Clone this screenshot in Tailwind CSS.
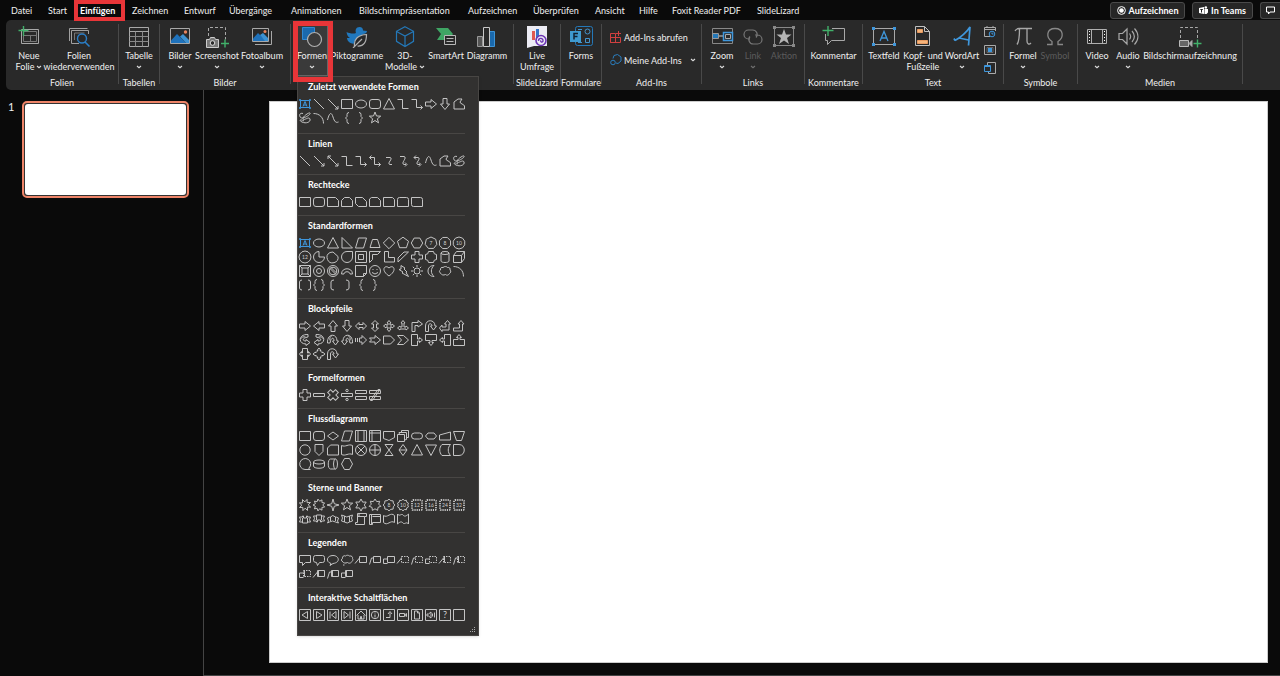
<!DOCTYPE html>
<html lang="de">
<head>
<meta charset="utf-8">
<title>Präsentation</title>
<script src="https://cdn.jsdelivr.net/npm/@tailwindcss/browser@4"></script>
</head>
<body class="min-h-screen flex flex-col overflow-hidden bg-[#0a0a0a] text-[#f0f0f0] font-['Lato','Noto_Sans',sans-serif] text-[9px] leading-[11px] whitespace-nowrap">
<svg class="hidden"><symbol id="chev" viewBox="0 0 6 4"><path d="M1 1l2 1.700L5 1" fill="none" stroke="#ddd" stroke-width="1.100"/></symbol></svg>

<header class="flex h-5 shrink-0 items-center pl-[11px]">
  <nav class="flex grow items-center">
    <a href="#" class="w-[37px]">Datei</a>
    <a href="#" class="w-8">Start</a>
    <a href="#" class="relative w-[52px] font-bold text-white">Einfügen<span class="absolute -left-1.5 -top-[5px] z-30 h-[21px] w-[51px] border-4 border-[#e83538]"></span></a>
    <a href="#" class="w-[52px]">Zeichnen</a>
    <a href="#" class="w-[45px]">Entwurf</a>
    <a href="#" class="w-[62px]">Übergänge</a>
    <a href="#" class="w-[68px]">Animationen</a>
    <a href="#" class="w-[109px]">Bildschirmpräsentation</a>
    <a href="#" class="w-[65px]">Aufzeichnen</a>
    <a href="#" class="w-[62px]">Überprüfen</a>
    <a href="#" class="w-11">Ansicht</a>
    <a href="#" class="w-[33px]">Hilfe</a>
    <a href="#" class="w-[85px]">Foxit Reader PDF</a>
    <a href="#">SlideLizard</a>
  </nav>
  <div class="flex gap-[7px] font-bold text-white">
    <button class="flex h-[17px] w-[75px] items-center justify-center gap-[3px] rounded-[3px] border border-[#4a4a4a] bg-[#262626]"><svg class="size-[9px]" viewBox="0 0 9 9"><circle cx="4.500" cy="4.500" r="3.900" fill="none" stroke="#fff"/><circle cx="4.500" cy="4.500" r="2.300" fill="#fff"/></svg>Aufzeichnen</button>
    <button class="flex h-[17px] w-[61px] items-center justify-center gap-[3px] rounded-[3px] border border-[#4a4a4a] bg-[#262626]"><svg class="size-[9px]" viewBox="0 0 9 9"><path fill="#fff" d="M0 2l5-1v7l-5-1zM5.500 3H9v3.500L7.500 8h-2z"/><circle cx="6.800" cy="1.500" r="1.300" fill="#fff"/><path d="M1.300 3.500h2.500M2.500 3.500v3" stroke="#222"/></svg>In Teams</button>
    <button aria-label="Kommentare" class="flex h-[17px] w-5 items-center justify-center rounded-l-[3px] border border-r-0 border-[#4a4a4a] bg-[#262626]"><svg class="size-[9px]" viewBox="0 0 9 9"><path fill="none" stroke="#fff" d="M.5 1h8v5H4L2.500 8V6h-2z"/></svg></button>
  </div>
</header>

<section class="relative z-10 ml-1.5 flex h-[70px] shrink-0 rounded-l-[5px] bg-[#292929] pb-0.5">
  <div class="flex w-28 shrink-0 flex-col">
    <div class="flex grow pt-1.5">
      <button class="flex w-[46px] flex-col items-center"><svg class="mb-0.5 h-[22px] w-6" viewBox="0 0 24 22" fill="none" stroke="#a8a8a8"><path d="M4.500 3.500h17v14h-17z"/><path d="M6.500 5.500h13v10h-13z M6.500 9.500h13 M13.500 9.500v6" stroke="#777"/><path d="M6.500 0v10M1.500 4.500h10" stroke="#41b06a" stroke-width="1.400"/></svg><span>Neue</span><span class="flex items-center gap-0.5">Folie <svg class="h-1 w-1.5"><use href="#chev"/></svg></span></button>
      <button class="flex w-[54px] flex-col items-center"><svg class="mb-0.5 h-[22px] w-6" viewBox="0 0 24 22" fill="none" stroke="#a0a0a0"><path d="M2.500 15V2.500h18"/><path d="M12 17.500H4.500v-13h17V8"/><path d="M7.500 14v-7h10" stroke="#777"/><circle cx="15" cy="12.500" r="4.500" fill="#292929" stroke="#2a7fc8" stroke-width="1.400"/><path d="M18 16l4.500 4.500" stroke="#2a7fc8" stroke-width="1.600"/></svg><span>Folien</span><span>wiederverwenden</span></button>
    </div><div class="text-center">Folien</div>
  </div>
  <div class="my-1 w-px shrink-0 bg-[#494949]"></div>
  <div class="flex w-10 shrink-0 flex-col">
    <div class="flex grow pt-1.5"><button class="flex w-10 flex-col items-center"><svg class="mb-0.5 h-[22px] w-6" viewBox="0 0 24 22" fill="none" stroke="#a8a8a8"><path d="M2.500 1.500h19v19h-19z M2.500 5.500h19"/><path d="M2.500 10.500h19M2.500 15.500h19M8.500 5.500v15M15.500 5.500v15" stroke="#888"/></svg><span>Tabelle</span><svg class="mt-1 h-1 w-1.5"><use href="#chev"/></svg></button></div>
    <div class="text-center">Tabellen</div>
  </div>
  <div class="my-1 w-px shrink-0 bg-[#494949]"></div>
  <div class="flex w-[130px] shrink-0 flex-col">
    <div class="flex grow pt-1.5">
      <button class="flex w-10 flex-col items-center"><svg class="mb-0.5 h-[22px] w-6" viewBox="0 0 24 22" fill="none"><path d="M2.500 2.500h19v15h-19z" stroke="#a8a8a8"/><path d="M3 14.500L9 8l9 9H3z" fill="#1f72bb"/><path d="M12 10.500l3-2.500 6 6v3h-3z" fill="#3d92d2"/><circle cx="17.500" cy="6" r="1.700" fill="#e8835c"/></svg><span>Bilder</span><svg class="mt-1 h-1 w-1.5"><use href="#chev"/></svg></button>
      <button class="flex w-[34px] flex-col items-center"><svg class="mb-0.5 h-[22px] w-6" viewBox="0 0 24 22" fill="none" stroke="#a8a8a8"><path d="M3.500 10V1.500h17v12" stroke-dasharray="3 2"/><path d="M1.500 13.500h3l1-2h4l1 2h3v8h-12z" fill="#777" stroke="#ccc"/><circle cx="7.500" cy="17" r="2.300" fill="#292929" stroke="#ddd"/><path d="M20 13.500v8M16 17.500h8" stroke="#41b06a" stroke-width="1.400"/></svg><span>Screenshot</span><svg class="mt-1 h-1 w-1.5"><use href="#chev"/></svg></button>
      <button class="flex w-14 flex-col items-center"><svg class="mb-0.5 h-[22px] w-6" viewBox="0 0 24 22" fill="none"><path d="M5 18.500h16.500V5" stroke="#a8a8a8"/><path d="M2.500 2.500h16v13h-16z" stroke="#a8a8a8"/><path d="M3 12.500L8 7l8 8H3z" fill="#1f72bb"/><path d="M10 9l3-2 5 5v3h-3z" fill="#3d92d2"/><circle cx="15" cy="5.500" r="1.500" fill="#e8835c"/></svg><span>Fotoalbum</span><svg class="mt-1 h-1 w-1.5"><use href="#chev"/></svg></button>
    </div><div class="text-center">Bilder</div>
  </div>
  <div class="my-1 w-px shrink-0 bg-[#494949]"></div>
  <div class="flex w-[222px] shrink-0 flex-col">
    <div class="flex grow pt-1.5">
      <div class="relative w-[42px]">
        <button aria-expanded="true" class="mx-auto -mt-0.5 flex h-[52px] w-8 flex-col items-center border border-[#666] bg-[#3a3a3a] pt-px"><svg class="mb-0.5 h-[22px] w-6 shrink-0" viewBox="0 0 24 22" fill="none"><path d="M2.500 1.500h12v12h-12z" fill="#1a69ad" stroke="#3089d2"/><circle cx="14.500" cy="13.500" r="7" fill="#3a3a3a" stroke="#b0b0b0" stroke-width="1.200"/></svg><span>Formen</span><svg class="mt-1 h-1 w-1.5"><use href="#chev"/></svg></button>
        <span class="pointer-events-none absolute left-0.5 -top-[5px] z-30 h-[61px] w-10 border-[5px] border-[#e83538]"></span>
        <div id="shape-menu" class="absolute left-1.5 top-[50px] z-20 h-[560px] w-[182px] border border-[#484644] bg-[#323130] shadow-sm">
          <div id="shape-list"></div>
          <svg class="absolute bottom-0.5 right-0.5 size-1.5" viewBox="0 0 6 6" fill="#aaa"><path d="M4 0h1v1H4zM4 2h1v1H4zM4 4h1v1H4zM2 2h1v1H2zM2 4h1v1H2zM0 4h1v1H0z"/></svg>
        </div>
      </div>
      <button class="flex w-12 flex-col items-center"><svg class="mb-0.5 h-[22px] w-6" viewBox="0 0 24 22" fill="none"><path d="M1.500 6c3 1.500 7 2 9.500 1-1-3 0-6 3.500-6 2.500 0 3.500 1.500 3.500 3.500l4 .5c0 2-2 3-4 3l-2 4-5 6c-6 0-9-3-9-6h3c-2-1-3-3-3.500-6z" fill="#2178bd"/><path d="M9.500 20c-1-7 4-11 12-11.500 0 8-3 12-9 11.500M8 22l9-9" fill="#292929" stroke="#b0b0b0" stroke-width="1.200"/></svg><span>Piktogramme</span></button>
      <button class="flex w-12 flex-col items-center"><svg class="mb-0.5 h-[22px] w-6" viewBox="0 0 24 22" fill="none" stroke="#2478b8" stroke-width="1.200"><path d="M12 .8l8.500 4.500v10L12 20.500l-8.500-5.200v-10zM3.500 5.500L12 10l8.500-4.500M12 10v10.500"/></svg><span>3D-</span><span class="flex items-center gap-0.5">Modelle <svg class="h-1 w-1.5"><use href="#chev"/></svg></span></button>
      <button class="flex w-[34px] flex-col items-center"><svg class="mb-0.5 h-[22px] w-6" viewBox="0 0 24 22" fill="none"><path d="M2 2h12l5 6-5 6H3l4-6z" fill="#3fa564"/><path d="M10.500 9.500h11v9h-11z" fill="#292929" stroke="#b8b8b8"/><path d="M12.500 12.500h7M12.500 15.500h7" stroke="#b8b8b8"/></svg><span>SmartArt</span></button>
      <button class="flex w-12 flex-col items-center"><svg class="mb-0.5 h-[22px] w-6" viewBox="0 0 24 22" fill="none"><path d="M2.500 10.500h5v10h-5z" fill="#555" stroke="#999"/><path d="M14.500 5.500h5v15h-5z" fill="#1a69ad" stroke="#3c94d8"/><path d="M8.500 1.500h6v19h-6z" fill="#292929" stroke="#c8c8c8"/></svg><span>Diagramm</span></button>
    </div>
  </div>
  <div class="my-1 w-px shrink-0 bg-[#494949]"></div>
  <div class="flex w-[46px] shrink-0 flex-col">
    <div class="flex grow pt-1.5"><button class="flex w-[46px] flex-col items-center"><svg class="mb-0.5 h-[22px] w-6" viewBox="0 0 24 22" fill="none"><path d="M2 0h20v20H9l-7 2z" fill="#ececf4"/><path d="M7 5h3v9H7z" fill="#e05a50"/><path d="M11 3h3v9h-3z" fill="#3776c8"/><circle cx="16" cy="14.500" r="5" fill="#ececf4" stroke="#6d35b5" stroke-width="1.600"/><path d="M13.500 15c0-4 5-3 4.500 0-.5 2-3 1-2-.5" stroke="#6d35b5" stroke-width="1.400"/></svg><span>Live</span><span>Umfrage</span></button></div>
    <div class="text-center">SlideLizard</div>
  </div>
  <div class="my-1 w-px shrink-0 bg-[#494949]"></div>
  <div class="flex w-10 shrink-0 flex-col items-center">
    <div class="flex grow pt-1.5"><button class="flex w-10 flex-col items-center"><svg class="mb-0.5 h-[22px] w-6" viewBox="0 0 24 22" fill="none"><rect x="6.500" y=".5" width="17" height="19" rx="2" stroke="#2478b8"/><circle cx="18.500" cy="5.500" r="2.500" stroke="#4494cc"/><path d="M16.500 12.500h4v4h-4zM9 3.500h4M9 16.500h4" stroke="#4494cc"/><path d="M1 5h11v11H1z" fill="#3f9ad0"/><path d="M5 13.500v-6h4M5 10.500h3.500" stroke="#123" stroke-width="1.500"/></svg><span>Forms</span></button></div>
    <div>Formulare</div>
  </div>
  <div class="my-1 w-px shrink-0 bg-[#494949]"></div>
  <div class="flex w-[99px] shrink-0 flex-col pl-2">
    <div class="flex grow flex-col gap-[11px] pt-[11px]">
      <button class="flex items-center gap-0.5"><svg class="size-3" viewBox="0 0 12 12" fill="none" stroke="#d04040"><path d="M.5 2.500h5v9h-5zM.5 6.500h10v5h-10zM8.500 0v5M6 2.500h5"/></svg>Add-Ins abrufen</button>
      <button class="flex items-center gap-0.5"><svg class="size-3" viewBox="0 0 12 12" fill="none" stroke="#2a7fc0"><path d="M3 4.500l1-3 3.500-1L11 3v4L8 9.500 6 9"/><circle cx="3" cy="8.500" r="2.300"/></svg>Meine Add-Ins<svg class="ml-1.5 h-1 w-1.5"><use href="#chev"/></svg></button>
    </div><div class="pr-2 text-center">Add-Ins</div>
  </div>
  <div class="my-1 w-px shrink-0 bg-[#494949]"></div>
  <div class="flex w-[102px] shrink-0 flex-col">
    <div class="flex grow pt-1.5">
      <button class="flex w-10 flex-col items-center"><svg class="mb-0.5 h-[22px] w-6" viewBox="0 0 24 22" fill="none"><path d="M2.500 2.500h20v15h-20z" stroke="#888"/><path d="M2.500 7.500h6v5h-6z" fill="#2478b8" stroke="#999"/><path d="M9 10h4" stroke="#999" stroke-width="1.500"/><path d="M13.500 6.500h9v8h-9z" fill="#292929" stroke="#3f97dc" stroke-width="1.500"/><path d="M15.500 8.500h5v4h-5z" stroke="#aaa"/></svg><span>Zoom</span><svg class="mt-1 h-1 w-1.5"><use href="#chev"/></svg></button>
      <button disabled class="flex w-[22px] flex-col items-center text-[#5c5c5c]"><svg class="mb-0.5 h-[22px] w-6 shrink-0" viewBox="0 0 24 22" fill="none" stroke="#777" stroke-width="1.200"><path d="M9 13H7.500a4.500 4.500 0 010-9h4a4.500 4.500 0 013.500 7.500M14 9h2.500a4.500 4.500 0 010 9h-4A4.500 4.500 0 019 10.500"/></svg><span>Link</span><svg class="mt-1 h-1 w-1.5 opacity-40"><use href="#chev"/></svg></button>
      <button disabled class="flex w-10 flex-col items-center text-[#5c5c5c]"><svg class="mb-0.5 h-[22px] w-6" viewBox="0 0 24 22" fill="none"><path d="M2.500 1.500h19v18h-19z" stroke="#888"/><path d="M1 0h3v3H1zM20 0h3v3h-3zM1 18h3v3H1zM20 18h3v3h-3z" fill="#888"/><path d="M12 3l2 5.500h5.500L15 12l2 6-5-3.500L7 18l2-6-4.500-3.500H10z" fill="#b4b4b4"/></svg><span>Aktion</span></button>
    </div><div class="text-center">Links</div>
  </div>
  <div class="my-1 w-px shrink-0 bg-[#494949]"></div>
  <div class="flex w-[57px] shrink-0 flex-col">
    <div class="flex grow pt-1.5"><button class="flex w-[57px] flex-col items-center"><svg class="mb-0.5 h-[22px] w-6" viewBox="0 0 24 22" fill="none" stroke="#a8a8a8"><path d="M10 2.500h12.500v12H9.500l-4 4v-4h-2V8"/><path d="M6 0v10M.5 4.500h11" stroke="#41b06a" stroke-width="1.400"/></svg><span>Kommentar</span></button></div>
    <div class="text-center">Kommentare</div>
  </div>
  <div class="my-1 w-px shrink-0 bg-[#494949]"></div>
  <div class="flex w-[140px] shrink-0 flex-col">
    <div class="flex grow pt-1.5">
      <button class="flex w-[42px] flex-col items-center"><svg class="mb-0.5 h-[22px] w-6" viewBox="0 0 24 22" fill="none"><path d="M1.500 2.500h21v16h-21z" stroke="#a8a8a8"/><path d="M0 1h3v3H0zM21 1h3v3h-3zM0 17h3v3H0zM21 17h3v3h-3z" fill="#3f97dc"/><path d="M8 15l4-9.500L16 15M9.500 12h5" stroke="#3f97dc" stroke-width="1.300"/></svg><span>Textfeld</span></button>
      <button class="flex w-9 flex-col items-center"><svg class="mb-0.5 h-[22px] w-6" viewBox="0 0 24 22" fill="none"><path d="M4.500.5h9l5 5v14h-14zM13.500.5v5h5" stroke="#c0c0c0"/><path d="M6.500 3.500h5v3h-5zM6.500 14.500h10v3h-10z" fill="#f4b57c" stroke="#e89a60"/></svg><span>Kopf- und</span><span>Fußzeile</span></button>
      <button class="flex w-[42px] flex-col items-center"><svg class="mb-0.5 h-[22px] w-6" viewBox="0 0 24 22" fill="none" stroke="#3f97dc" stroke-width="1.700"><path d="M5 14.500C10 12 17 6 20 1l-1.500 18.500M9 12l9.500 2M5 14.500l-1-2"/></svg><span>WordArt</span><svg class="mt-1 h-1 w-1.5"><use href="#chev"/></svg></button>
      <div class="flex w-3.5 flex-col items-center gap-1.5">
        <button aria-label="Datum und Uhrzeit"><svg class="size-3" viewBox="0 0 12 12" fill="none" stroke="#aaa"><path d="M6 10.500H.5v-9h11V5M.5 3.500h11M3 0v2M9 0v2"/><circle cx="8" cy="8" r="2.800" stroke="#3f97dc"/><path d="M8 6.500V8h1.500" stroke="#3f97dc"/></svg></button>
        <button aria-label="Foliennummer"><svg class="size-3" viewBox="0 0 12 12" fill="none" stroke="#aaa"><path d="M.5 1.500h11v9H.5z"/><path d="M3 3.500h6v5H3z" stroke="#666"/><path d="M4 4h4v4H4z" fill="#3f97dc" stroke="none"/></svg></button>
        <button aria-label="Objekt"><svg class="size-3" viewBox="0 0 12 12" fill="none" stroke="#aaa"><path d="M3.500 3V.5h8v11h-7V10"/><path d="M.5 3.500h6v6h-6zM.5 4.500h6" stroke="#3f97dc"/></svg></button>
      </div>
    </div><div class="text-center">Text</div>
  </div>
  <div class="my-1 w-px shrink-0 bg-[#494949]"></div>
  <div class="flex w-[73px] shrink-0 flex-col">
    <div class="flex grow pt-1.5">
      <button class="flex w-[38px] flex-col items-center"><svg class="mb-0.5 h-[22px] w-6" viewBox="0 0 24 22" fill="none" stroke="#a8a8a8" stroke-width="1.300"><path d="M4 5c1-2 2-2.500 4-2.500h13M8.500 3c0 7 0 12-2.500 15.500M16 3v12c0 3 2 4 4 2"/></svg><span>Formel</span><svg class="mt-1 h-1 w-1.5"><use href="#chev"/></svg></button>
      <button disabled class="flex w-[26px] flex-col items-center text-[#5c5c5c]"><svg class="mb-0.5 h-[22px] w-6" viewBox="0 0 24 22" fill="none" stroke="#888" stroke-width="1.300"><path d="M4 18.500h5v-3C3 12 3 2.500 12 2.500S21 12 15 15.500v3h5"/></svg><span>Symbol</span></button>
    </div><div class="text-center">Symbole</div>
  </div>
  <div class="my-1 w-px shrink-0 bg-[#494949]"></div>
  <div class="flex w-[164px] shrink-0 flex-col">
    <div class="flex grow pt-1.5">
      <button class="flex w-[38px] flex-col items-center"><svg class="mb-0.5 h-[22px] w-6" viewBox="0 0 24 22" fill="none" stroke="#b0b0b0"><path d="M2.500 3.500h19v14h-19zM6.500 3.500v14M17.500 3.500v14"/><path d="M4.500 5v12M19.500 5v12" stroke="#fff" stroke-dasharray="1 2"/></svg><span>Video</span><svg class="mt-1 h-1 w-1.5"><use href="#chev"/></svg></button>
      <button class="flex w-6 flex-col items-center"><svg class="mb-0.5 h-[22px] w-6 shrink-0" viewBox="0 0 24 22" fill="none" stroke="#a8a8a8" stroke-width="1.200"><path d="M3 7.500h3.500L11 3v15l-4.500-4.500H3zM13.500 7.500c1.500 2 1.500 4 0 6M16 5c3 3.500 3 7.500 0 11M18.500 2.500c4.500 5 4.500 11 0 16"/></svg><span>Audio</span><svg class="mt-1 h-1 w-1.5"><use href="#chev"/></svg></button>
      <button class="flex w-[100px] flex-col items-center"><svg class="mb-0.5 h-[22px] w-6" viewBox="0 0 24 22" fill="none" stroke="#a8a8a8"><path d="M2.500 12V1.500h17v11" stroke-dasharray="3 2"/><path d="M1.500 14.500h9v6h-9z" fill="#666" stroke="#bbb"/><path d="M11 17.500l3-3v6z" fill="#aaa"/><path d="M19.500 13.500v8M15.500 17.500h8" stroke="#41b06a" stroke-width="1.400"/></svg><span>Bildschirmaufzeichnung</span></button>
    </div><div class="text-center">Medien</div>
  </div>
  <div class="my-1 w-px shrink-0 bg-[#494949]"></div>
</section>

<main class="flex grow">
  <aside class="flex w-[204px] shrink-0 items-start border-r border-[#444] pt-[11px]">
    <span class="w-[22px] pl-2 text-[11px]">1</span>
    <button aria-label="Folie 1" class="h-[97px] w-[167px] rounded-[5px] border-2 border-[#ee8468] bg-[#333] p-px"><span class="block h-full rounded-[3px] bg-white"></span></button>
  </aside>
  <div class="flex grow flex-col border-b border-[#444] pb-3 pl-[65px] pr-3 pt-[11px]"><div class="grow border border-[#ccc] bg-white"></div></div>
</main>

<script>
const txt = (s, x = 7, y = 9) => `<text x="${x}" y="${y}" text-anchor="middle" font-size="5" fill="#d0d0d0" stroke="none">${s}</text>`;
const circ = (r, x = 7, y = 7) => `<circle cx="${x}" cy="${y}" r="${r}"/>`;
const p = (d, a = '') => `<path d="${d}" ${a}/>`;
const poly = (n, r1, r2 = r1, rot = -90) => {
  const k = r1 === r2 ? n : n * 2; let s = '';
  for (let i = 0; i < k; i++) { const r = i % 2 ? r2 : r1, t = (rot + 360 * i / k) * Math.PI / 180; s += (i ? 'L' : 'M') + (7 + r * Math.cos(t)).toFixed(2) + ' ' + (7 + r * Math.sin(t)).toFixed(2); }
  return s + 'z';
};
const rot = (deg, m) => `<g transform="rotate(${deg} 7 7)">${m}</g>`;
const flip = m => `<g transform="matrix(-1 0 0 1 14 0)">${m}</g>`;
const box = 'M1.5 2.500h11v9h-11z', sq = 'M1.5 1.500h11v11h-11z';
const braceL = 'M5 1.500q-2 0-2 2v2L1.500 7 3 8.500v2q0 2 2 2', braceR = 'M9 1.500q2 0 2 2v2L12.500 7 11 8.500v2q0 2-2 2';
const S = {
  tbox: '<g stroke="#3f97dc"><path d="M2.500 3.500h9v7h-9z"/><path d="M5 9.500L7 4.500 9 9.500M6 8h2"/><path d="M1.500 2.500h1v1h-1zM11.500 2.500h1v1h-1zM1.500 10.500h1v1h-1zM11.500 10.500h1v1h-1z"/></g>',
  line: p('M2 2l10 10'), larr: p('M2 2l10 10M12 9v3H9'), l2: p('M2 2l10 10M12 9v3H9M2 5V2h3'),
  rect: p(box), ell: '<ellipse cx="7" cy="7" rx="5.500" ry="4"/>', rr: '<rect x="1.500" y="2.500" width="11" height="9" rx="2.500"/>',
  tri: p('M7 1.500l5.500 10.500h-11z'), elb: p('M1.500 2.500h5v9h6'), elba: p('M1.500 2.500h5v8h6M10.500 8.500l2 2-2 2'), elb2: p('M1.500 3.500h5v7h6M10.500 8.500l2 2-2 2M3.500 1.500l-2 2 2 2'),
  ar: p('M1.500 5v4h5.500v2.500l5.500-4.500L7 2.500V5z'),
  free: p('M2 12V5l4-3h4L8 5c0 2 4 2 4.500 4v3z'), scr: p('M5 2.500C0 1 1 8 5 7s8-4 7-5-8 4-7 6 6-3 7 0-4 5-8 3-1-3 2-1'),
  arc: p('M1.500 2.500c6 0 10 4 10 10'), cur: p('M1.500 9c2-8 4-8 5.500-3s3 6 5.500 5'),
  br1: p('M9 1.500q-2 0-2 2v2L5.500 7 7 8.500v2q0 2 2 2'), br2: p('M5 1.500q2 0 2 2v2L8.500 7 7 8.500v2q0 2-2 2'),
  star: p(poly(5, 6, 2.5)), sc: p('M4 3.500h4c4 1-4 6 0 7h2'), sca: p('M4 2.500h4c4 1-4 7 0 8h2M9 8.500l2 2-2 2'), sc2: p('M4 3.500h4c4 1-4 6 0 7h2M9 8.500l2 2-2 2M6 1.500l-2 2 2 2'),
  plus: p('M5 1.500h4V5h3.500v4H9v3.500H5V9H1.500V5H5z'), uturn: p('M1.500 12.500V7c0-7 9.500-7 9.500 0h1.500L9.500 11 6.500 7H8c0-3-3.500-3-3.500 0v5.500z'),
  bent: p('M2 12.500v-9h6v-2l4.500 3.500L8 8V6.500H5v6z'), bup: p('M1.500 9h6V5H6l3-3.500L12 5h-1.500v7h-9z'),
  cup: p('M10 1.500C0 1 0 11 8 11v1.500L12 9.500 8 6.500V8C4 8 4 5 10 4zM2.500 6c1-2 3-2.500 5-2'),
  ribbon: p('M1.500 4h3v-1h5v1h3l-1 2.500 1 2.500h-3v1h-1v-2h-3v2h-1v-1h-3l1-2.500zM4.500 4v4M9.500 4v4')
};
const starNum = (n, k) => p(poly(k, 5.8, 4.7)) + txt(n);
const gear = n => '<rect x="2" y="2" width="10" height="10" rx="1" stroke-width="1.800" stroke-dasharray="1.200 1"/>' + txt(n);
const call = (dash, bar, tail) => p('M5.500 3.500h7v6h-7z', dash ? 'stroke-dasharray="1.500 1"' : '') + p(tail) + (bar ? p('M6.500 3.500v6') : '');
const T = ['M5.500 5L1 10.500', 'M5.500 5h-2l-2 6.500', 'M5.500 6h-4v4.500h4'];
const action = m => p(sq) + m;
const groups = [
 ['Zuletzt verwendete Formen', [S.tbox, S.line, S.larr, S.rect, S.ell, S.rr, S.tri, S.elb, S.elba, S.ar, rot(90, S.ar), S.free, S.scr, S.arc, S.cur, S.br1, S.br2, S.star]],
 ['Linien', [S.line, S.larr, S.l2, S.elb, S.elba, S.elb2, S.sc, S.sca, S.sc2, S.cur, S.free, S.scr]],
 ['Rechtecke', [S.rect, S.rr, p('M1.500 2.500h8l3 3v6h-11z'), p('M1.500 11.500V5.500l3-3h5l3 3v6z'), p('M1.500 2.500h7l4 4v5h-8l-3-3z'), p('M1.500 11.500V4l2-1.500h6l3 3v6z'), p('M1.500 2.500h9l2 2v7h-11z'), p('M1.500 11.500v-7q0-2 2-2h7q2 0 2 2v7z'), p('M1.500 2.500h9q2 0 2 2v7h-9q-2 0-2-2z')]],
 ['Standardformen', [S.tbox, S.ell, S.tri, p('M2 1.500L12.500 12H2z'), p('M4.500 2h8l-3 10h-8z'), p('M4.500 3.500h5l2.500 8H2z'), p(poly(4, 5.7)), p(poly(5, 5.8)), p(poly(6, 5.7, 5.7, 0)), p(poly(7, 6)) + txt(7), p(poly(8, 6, 6, 22)) + txt(8), p(poly(10, 6)) + txt(10),
   p(poly(12, 6)) + txt(12), p('M7 1.500A5.500 5.500 0 1012.500 7H7z'), p('M4 2.500a5.500 5.500 0 108 4L7 2z'), p('M7 1.500h5.500V7A5.500 5.500 0 117 1.500z'), p(sq + 'M4.500 4.500h5v5h-5z'), p('M1.500 1.500h11l-3 3h-5v5l-3 3z'), p('M2.500 1.500h4v6h6v4.500h-10z'), p('M2 12V8l6-6h4.500z'), S.plus, p('M4.500 1.500h5q0 3 3 3v5q-3 0-3 3h-5q0-3-3-3v-5q3 0 3-3z'), '<ellipse cx="7" cy="3" rx="4" ry="1.500"/>' + p('M3 3v8c0 2 8 2 8 0V3'), p('M1.500 5.500h8v7h-8zM1.500 5.500l3-4h8l-3 4M12.500 1.500v7l-3 4'),
   p(sq + 'M4 4h6v6H4zM1.500 1.500L4 4M12.500 1.500L10 4M1.500 12.500L4 10M12.500 12.500L10 10'), circ(5.5) + circ(2.5), circ(5.5) + circ(3.8) + p('M4 4.500l6 6M5 3.500l5 5'), p('M1.500 10c0-7 11-7 11 0H10c0-3-6-3-6 0z'), p('M1.500 1.500h11v8l-3 3h-8zM9.500 12.500v-3h3'), circ(5.5) + p('M4 8.500q3 3 6 0M5 5v1M9 5v1'), p('M7 12C-2 6 3 0 7 4c4-4 9 2 0 8z'), p('M5 1.500L9 4 8 5l3 3-1 .5 2.500 4L6 9l1-1-4-2.500 2-.5z'), circ(3) + p('M7 1v2M7 11v2M1 7h2M11 7h2M2.800 2.800l1.400 1.400M9.800 9.800l1.400 1.400M11.200 2.800L9.800 4.200M4.200 9.800l-1.400 1.400'), p('M10 1.500c-8 0-8 11 0 11-3.500-3-3.500-8 0-11z'), p('M3 9.500c-2-1-2-3-.5-3.500-.5-2 1-3 2.500-2.500 1.500-1.500 4-1 4.500 0 2-.5 3 1 2.500 2.500 1.500 1 .5 3-.5 3.500-1 2-3 2-4 1-2 1-4 .5-4.500-1z'), S.arc,
   p('M4 2q-2.500 0-2.500 2v6q0 2 2.500 2M10 2q2.500 0 2.500 2v6q0 2-2.500 2'), p(braceL + braceR), p('M8 2q-3 0-3 2v6q0 2 3 2'), p('M6 2q3 0 3 2v6q0 2-3 2'), S.br1, S.br2]],
 ['Blockpfeile', [S.ar, rot(180, S.ar), rot(-90, S.ar), rot(90, S.ar), p('M1.500 7L5 3.500v2h4v-2L12.500 7 9 10.500v-2H5v2z'), rot(90, p('M1.500 7L5 3.500v2h4v-2L12.500 7 9 10.500v-2H5v2z')), p('M7 1.500L9 4H8v2h2V5l2.500 2L10 9V8H8v2h1l-2 2.500L5 10h1V8H4v1L1.500 7 4 5v1h2V4H5z'), p('M7 1.500L9 4H8v4h2V7l2.500 2L10 11v-1H4v1L1.500 9 4 7v1h2V4H5z'), S.bent, S.uturn, p('M1.500 9L4 6v2h4V5H6.500L9.500 1.500 12.500 5H11v6H4v1.500z'), S.bup,
   S.cup, flip(S.cup), flip(rot(90, flip(flip(S.cup)))), rot(90, S.cup), p('M1.500 5v4M3.500 5v4M5.500 5v4H8v2.500L12.500 7 8 2.500V5z'), p('M1.500 5H7V2.500L12.500 7 7 11.500V9H1.500l2-2z'), p('M1.500 3h7l4 4-4 4h-7z'), p('M1.500 2.500h6l5 4.500-5 4.500h-6l4-4.500z'), p('M1.500 1.500h6V6h2V4.500l3 2.500-3 2.500V8h-2v4.500h-6z'), p('M1.500 1.500h11v6H8v2h1.500L7 12.500 4.500 9.500H6v-2H1.500z'), flip(p('M1.500 1.500h6V6h2V4.500l3 2.500-3 2.500V8h-2v4.500h-6z')), p('M1.500 12.500h11v-6H8v-2h1.500L7 1.500 4.500 4.500H6v2H1.500z'),
   p('M4.500 1.500h5V6h1V4.500l2 2.500-2 2.500V8h-1v4.500h-5V8h-1v1.500l-2-2.500 2-2.500V6h1z'), p('M7 1l2 2.500H8L10.500 6V5l2.500 2-2.500 2V8L8 10.500h1L7 13l-2-2.500h1L3.500 8v1L1 7l2.500-2v1L6 3.500H5z'), S.uturn]],
 ['Formelformen', [S.plus, p('M1.500 5.500h11v3h-11z'), rot(45, S.plus), p('M1.500 5.500h11v3h-11z') + circ(1.2, 7, 2.5) + circ(1.2, 7, 11.5), p('M1.500 2.500h11v3h-11zM1.500 8.500h11v3h-11z'), p('M1.500 2.500h11v3h-11zM1.500 8.500h11v3h-11zM2.500 12.500l7.500-11h2l-7.500 11z')]],
 ['Flussdiagramm', [S.rect, S.rr, p('M7 3l5.500 4L7 11 1.500 7z'), p('M4.500 2h8l-3 10h-8z'), p(sq + 'M4 1.500v11M10 1.500v11'), p(sq + 'M4 1.500v11M1.500 4h11'), p('M1.500 2.500h11v6l-5.500 3-5.500-2z'), p('M1.500 5.500h7v7h-7zM3.500 5.500l-.5-2h7.500v7l-2 .5M5.500 3.500v-2h7v7h-2'), '<rect x="1.500" y="4" width="11" height="6" rx="3"/>', p('M4 4h6l2.500 3L10 10H4L1.500 7z'), p('M1.500 6l11-3v8h-11z'), p('M1.500 2.500h11l-3 9h-5z'),
   circ(5.2), p('M3 1.500h8v7l-4 4-4-4z'), p('M4.500 2h8v10h-11V5z'), p('M1.500 2.500c4 2 7-2 11 0v9c-4-2-7 2-11 0z'), circ(5.5) + p('M3 3l8 8M11 3l-8 8'), circ(5.5) + p('M7 1.500v11M1.500 7h11'), p('M3 1.500h8l-8 11h8z'), p('M7 1.500L11 7l-4 5.500L3 7zM3 7h8'), S.tri, rot(180, S.tri), p('M4 1.500h8.500c-3 3-3 8 0 11H4c-3-3-3-8 0-11z'), p('M1.500 1.500H7c7 0 7 11 0 11H1.500z'),
   p('M12.500 12.500H7A5.500 5.500 0 1111 11v1.500'), '<ellipse cx="7" cy="5" rx="5.500" ry="2"/>' + p('M1.500 5v4c0 3 11 3 11 0V5'), '<ellipse cx="9.500" cy="7" rx="2" ry="5"/>' + p('M9.500 2h-5c-3 0-3 10 0 10h5'), p('M4.500 1.500h5l3 5.500-3 5.500h-5l-3-5.500z')]],
 ['Sterne und Banner', [p(poly(8, 6, 3.2, -70)), p(poly(9, 6, 3.8, -60)), p(poly(4, 6, 1.8)), S.star, p(poly(6, 6, 3.3)), p(poly(7, 6, 3.8)), starNum(8, 8), starNum(10, 10), gear(12), gear(16), gear(24), gear(32),
   rot(180, S.ribbon), S.ribbon, p('M1.500 11l1-2-1-3q2-1 3-1 2-3 5 0 1 0 3 1l-1 3 1 2-3-1q-3-2-6 0zM4.500 5v4M9.500 5v4'), p('M1.500 3l1 3-1 3 3 1q3 2 5 0l3-1-1-3 1-3-3 1q-3 2-5 0zM4.500 4v6M9.500 4v6'), p('M3.500 1.500h9v3h-2v8h-9v-2h2zM3.500 4.500h7M5 1.500v3'), p('M1.500 2.500h11v8h-8v2h-3zM3.500 2.500v10M4.500 4.500h8'), p('M1.500 3.500c4 3 7-4 11 0v7c-4-3-7 4-11 0z'), p('M1.500 2c2 3 4-1 5.500 1s3.500 1 5.500-1v10c-2-3-4 1-5.500-1s-3.500-1-5.500 1z')]],
 ['Legenden', [p('M1.500 2.500h11v7h-5l-3 3v-3h-3z'), p('M3.500 2.500h7q2 0 2 2v3q0 2-2 2h-3l-2 3-1-3q-3 0-3-2v-3q0-2 2-2z'), p('M5 10.500c-6-2-4-8 2-8s8 7 0 8l-3 2z'), p('M3 9c-2-1-2-3-.5-3.500C2 3.500 4 2 5.500 3c1-1 3-1 4 0 2-.5 3.500 1 3 2.500 1 1 0 3-1 3.500-1 1.500-3 1.500-4 .5-2 1-4 .5-4.500-.5zM3 12h1.500'), call(0,0,T[0]), call(0,0,T[1]), call(0,0,T[2]), call(1,0,T[0]), call(1,0,T[1]), call(1,0,T[2]), call(1,1,T[0]), call(1,1,T[1]),
   call(1,1,T[2]), call(0,1,T[0]), call(0,1,T[1]), call(0,1,T[2])]],
 ['Interaktive Schaltflächen', [action(p('M9.500 3.500v7L4 7z')), action(p('M4.500 3.500v7L10 7z')), action(p('M10 3.500v7L5.500 7zM4 3.500v7')), action(p('M4 3.500v7L8.500 7zM10 3.500v7')), action(p('M2.500 7.500L7 3l4.500 4.500M4 7v4h6V7M6.500 11V8.500h1V11')), action(circ(3.7) + p('M7 6.500v3M7 4.500v1')), action(p('M4 9.500h4V5M6 6l2-2.500L10 6')), action(p('M3.500 5.500h5v3h-5zM8.500 7l2-1.500v3z')), action(p('M4.500 3h3l2 2v6h-5zM7.500 3v2h2')), action(p('M3 6h1.500L7 4v6L4.500 8H3zM8.500 5.500v3M10.500 4.500v5')), action(txt('?', 7, 10).replace('font-size="5"', 'font-size="9"')), p(sq)]]
];
document.getElementById('shape-list').innerHTML = groups.map(([name, items], i) => `
  <section class="mr-[13px] pb-1.5 ${i ? 'border-t border-[#484644]' : 'pb-2'}">
    <h3 class="h-5 pl-2.5 pt-1 font-bold text-white">${name}</h3>
    <div class="grid grid-cols-[repeat(12,14px)]">${items.map((m, j) => `<button class="size-3.5" aria-label="${name} ${j + 1}"><svg class="size-3.5" viewBox="0 0 14 14" fill="none" stroke="#c4c4c4" stroke-width="1">${m}</svg></button>`).join('')}</div>
  </section>`).join('');
</script>
</body>
</html>
